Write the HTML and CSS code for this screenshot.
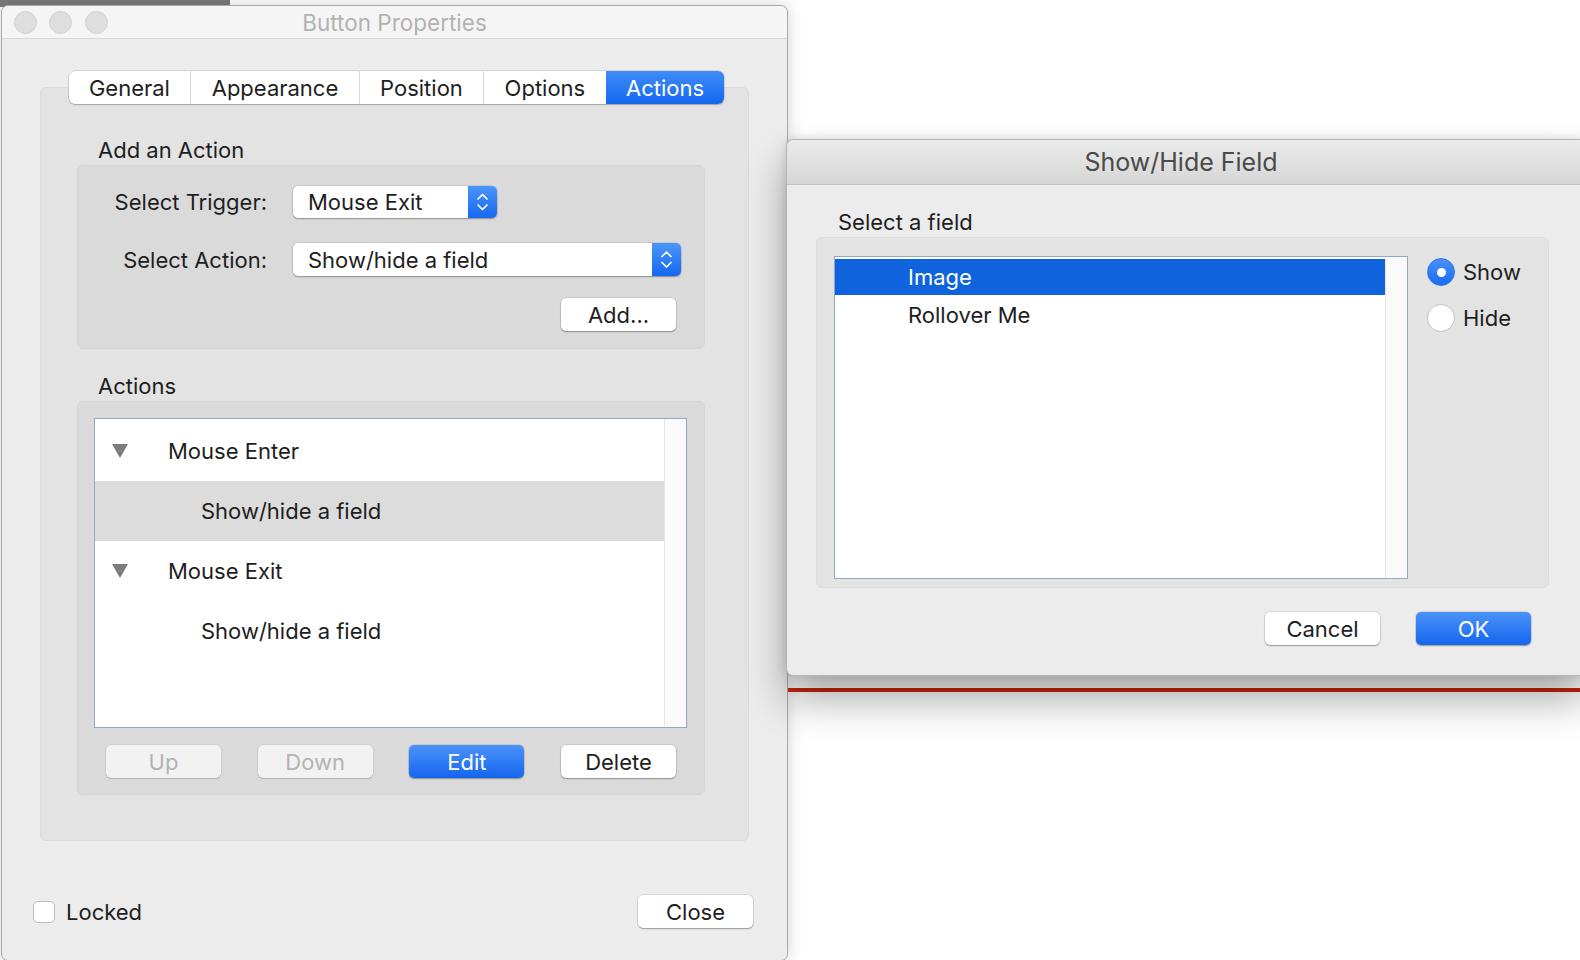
FILE: index.html
```html
<!DOCTYPE html>
<html>
<head>
<meta charset="utf-8">
<title>Button Properties</title>
<link rel="stylesheet" href="styles.css">
</head>
<body>
<div class="topstrip"></div>

<div class="win main">
  <div class="titlebar">
    <div class="lights"><span></span><span></span><span></span></div>
    <div class="wtitle">Button Properties</div>
    <div></div>
  </div>
  <div class="mbody">
    <div class="tabs">
      <div class="tab">General</div>
      <div class="tab">Appearance</div>
      <div class="tab">Position</div>
      <div class="tab">Options</div>
      <div class="tab active">Actions</div>
    </div>
    <div class="panel">
      <div class="seclabel">Add an Action</div>
      <div class="group g1">
        <div class="form">
          <div class="flabel">Select Trigger:</div>
          <div class="popup w1">
            <span class="ptext">Mouse Exit</span>
            <span class="stepper"><svg width="29" height="32" viewBox="0 0 29 32"><path d="M10 13 L14.5 8.5 L19 13" fill="none" stroke="#fff" stroke-width="1.7" stroke-linecap="round" stroke-linejoin="round"/><path d="M10 19 L14.5 23.5 L19 19" fill="none" stroke="#fff" stroke-width="1.7" stroke-linecap="round" stroke-linejoin="round"/></svg></span>
          </div>
          <div class="flabel">Select Action:</div>
          <div class="popup w2">
            <span class="ptext">Show/hide a field</span>
            <span class="stepper"><svg width="29" height="33" viewBox="0 0 29 33"><path d="M10 13.5 L14.5 9 L19 13.5" fill="none" stroke="#fff" stroke-width="1.7" stroke-linecap="round" stroke-linejoin="round"/><path d="M10 19.5 L14.5 24 L19 19.5" fill="none" stroke="#fff" stroke-width="1.7" stroke-linecap="round" stroke-linejoin="round"/></svg></span>
          </div>
        </div>
        <div class="addrow"><div class="btn">Add...</div></div>
      </div>
      <div class="seclabel gap">Actions</div>
      <div class="group g2">
        <div class="list">
          <div class="rows">
            <div class="row parent"><svg class="tri" width="16" height="14" viewBox="0 0 16 14"><polygon points="0,0 16,0 8,14" fill="#7d7d7d"/></svg><span>Mouse Enter</span></div>
            <div class="row child sel">Show/hide a field</div>
            <div class="row parent"><svg class="tri" width="16" height="14" viewBox="0 0 16 14"><polygon points="0,0 16,0 8,14" fill="#7d7d7d"/></svg><span>Mouse Exit</span></div>
            <div class="row child">Show/hide a field</div>
          </div>
          <div class="track"></div>
        </div>
        <div class="btnrow">
          <div class="btn disabled">Up</div>
          <div class="btn disabled">Down</div>
          <div class="btn primary">Edit</div>
          <div class="btn">Delete</div>
        </div>
      </div>
    </div>
    <div class="footer">
      <div class="check"><span class="box"></span><span>Locked</span></div>
      <div class="btn">Close</div>
    </div>
  </div>
</div>

<div class="redline"></div>

<div class="win dialog">
  <div class="dtitlebar">Show/Hide Field</div>
  <div class="dbody">
    <div class="seclabel">Select a field</div>
    <div class="group dgroup">
      <div class="list dlist">
        <div class="drows">
          <div class="drow selected">Image</div>
          <div class="drow">Rollover Me</div>
        </div>
        <div class="track"></div>
      </div>
      <div class="radios">
        <div class="radio"><span class="rb on"><span class="dot"></span></span><span>Show</span></div>
        <div class="radio"><span class="rb"></span><span>Hide</span></div>
      </div>
    </div>
    <div class="dbtns">
      <div class="btn">Cancel</div>
      <div class="btn primary">OK</div>
    </div>
  </div>
</div>
</body>
</html>
```
FILE: styles.css
```css
* { box-sizing: border-box; }
html, body { margin: 0; padding: 0; }
body {
  width: 1580px;
  height: 960px;
  overflow: hidden;
  position: relative;
  background: #ffffff;
  font-family: "Inter", "Liberation Sans", sans-serif;
  font-size: 22px;
  color: #1e1e1e;
}
.topstrip {
  position: absolute;
  left: 0; top: 0;
  width: 230px; height: 7px;
  background: #7b7b7b;
}
.redline {
  position: absolute;
  left: 788px; top: 688px;
  width: 800px; height: 4px;
  background: #c8240f;
}
.win { position: absolute; }

/* main window */
.main {
  left: 1px; top: 5px;
  width: 787px; height: 956px;
  background: #ececec;
  border: 1px solid #a9a9a9;
  border-radius: 7px;
  box-shadow: 0 0 16px rgba(0,0,0,0.18);
  display: flex;
  flex-direction: column;
}
.titlebar {
  height: 33px;
  flex: none;
  display: grid;
  grid-template-columns: 1fr auto 1fr;
  align-items: center;
  background: #f5f5f5;
  border-bottom: 1px solid #d9d9d9;
  border-radius: 7px 7px 0 0;
}
.lights { display: flex; gap: 12.5px; padding-left: 11.5px; }
.lights span {
  width: 23px; height: 23px;
  border-radius: 50%;
  background: #dedede;
  border: 1px solid #d2d2d2;
}
.wtitle { font-size: 22.5px; color: #b2b2b2; }

.mbody {
  flex: 1;
  display: flex;
  flex-direction: column;
  padding: 32px 38px 0 38px;
}
.tabs {
  align-self: center;
  display: flex;
  height: 33px;
  background: #fff;
  border-radius: 6px;
  box-shadow: 0 0 0 0.5px rgba(0,0,0,0.18), 0 1px 1.5px rgba(0,0,0,0.22);
  position: relative;
  z-index: 1;
  margin: 0 0 -17px 4px;
}
.tab {
  padding: 0 20.4px;
  display: flex;
  align-items: center;
  border-left: 1px solid #dadada;
}
.tab:first-child { border-left: none; }
.tab.active {
  background: linear-gradient(#3f8cf8, #1468f0);
  color: #fff;
  border-radius: 0 6px 6px 0;
  border-left: none;
}
.panel {
  background: #e3e3e3;
  border: 1px solid #dbdbdb;
  border-radius: 6px;
  padding: 49px 43px 45px 36px;
}
.seclabel {
  line-height: 26px;
  height: 26px;
  margin: 0 0 2px 21px;
}
.seclabel.gap { margin-top: 24px; }
.group {
  background: #dadada;
  border: 1px solid #d5d5d5;
  border-radius: 6px;
}
.g1 { padding: 20px 23px 17px 0; }
.form {
  display: grid;
  grid-template-columns: 189px auto;
  column-gap: 26px;
  row-gap: 25px;
  align-items: center;
}
.flabel { text-align: right; }
.popup {
  display: flex;
  align-items: center;
  background: #fff;
  border-radius: 5px;
  box-shadow: 0 0 0 0.5px rgba(0,0,0,0.15), 0 1px 1.5px rgba(0,0,0,0.3);
  justify-self: start;
}
.popup.w1 { width: 204px; height: 32px; }
.popup.w2 { width: 388px; height: 33px; }
.ptext { flex: 1; padding-left: 15px; white-space: nowrap; }
.stepper {
  width: 29px;
  height: 100%;
  background: linear-gradient(#4b95f9, #1668f0);
  border-radius: 0 5px 5px 0;
  display: flex;
}
.addrow {
  display: flex;
  justify-content: flex-end;
  margin-top: 22px;
  padding-right: 5px;
}
.btn {
  width: 115px;
  height: 33px;
  display: flex;
  align-items: center;
  justify-content: center;
  background: #fff;
  border-radius: 5px;
  box-shadow: 0 0 0 0.5px rgba(0,0,0,0.16), 0 1px 1.5px rgba(0,0,0,0.3);
}
.btn.disabled { background: #f2f2f2; color: #b3b3b3; box-shadow: 0 0 0 0.5px rgba(0,0,0,0.1), 0 1px 1px rgba(0,0,0,0.15); }
.btn.primary { background: linear-gradient(#4b93f8, #1565ef); color: #fff; }

.g2 { padding: 16px 17px 16px 16px; }
.list {
  display: flex;
  background: #fff;
  border: 1px solid #93a8c8;
}
.g2 .list { height: 310px; }
.rows { flex: 1; padding-top: 2px; }
.row {
  height: 60px;
  display: flex;
  align-items: center;
}
.row.parent { padding-left: 17px; }
.row.parent span { margin-left: 40px; }
.row.child { padding-left: 106px; }
.row.sel { background: #dcdcdc; }
.track {
  width: 22px;
  background: #fafafa;
  border-left: 1px solid #e8e8e8;
}
.btnrow {
  display: flex;
  justify-content: space-between;
  margin-top: 17px;
  padding: 0 11px 0 12px;
}
.footer {
  display: flex;
  align-items: center;
  justify-content: space-between;
  margin: 54px -4px 0 -7px;
}
.check { display: flex; align-items: center; gap: 11px; }
.box {
  width: 22px; height: 22px;
  background: #fff;
  border: 1px solid #bdbdbd;
  border-radius: 5px;
}

/* dialog */
.dialog {
  left: 786px; top: 139px;
  width: 800px; height: 537px;
  background: #ececec;
  border: 1px solid #b2b2b2;
  border-right: none;
  border-radius: 7px 0 0 7px;
  box-shadow: 0 24px 40px rgba(0,0,0,0.33), 0 0 12px rgba(0,0,0,0.12);
  z-index: 2;
  display: flex;
  flex-direction: column;
}
.dtitlebar {
  height: 45px;
  flex: none;
  display: flex;
  align-items: center;
  justify-content: center;
  padding-right: 11px;
  font-size: 25px;
  color: #4a4a4a;
  background: linear-gradient(#ebebeb, #d6d6d6);
  border-bottom: 1px solid #c3c3c3;
  border-radius: 7px 0 0 0;
}
.dbody { padding: 24px 0 0 29px; }
.dbody .seclabel { margin-left: 22px; }
.dgroup {
  width: 733px;
  height: 351px;
  background: #e3e3e3;
  border: 1px solid #dcdcdc;
  display: flex;
  padding: 18px 0 0 17px;
}
.dlist { width: 574px; height: 323px; }
.drows { flex: 1; padding-top: 2px; display: flex; flex-direction: column; gap: 2px; }
.drow {
  height: 36px;
  display: flex;
  align-items: center;
  padding-left: 73px;
}
.drow.selected { background: #0f63dc; color: #fff; }
.radios {
  display: flex;
  flex-direction: column;
  gap: 18px;
  margin-left: 19px;
  padding-top: 2px;
}
.radio { display: flex; align-items: center; gap: 8px; height: 28px; }
.rb {
  width: 28px; height: 28px;
  border-radius: 50%;
  background: #fff;
  border: 1px solid #c2c2c2;
  display: flex;
  align-items: center;
  justify-content: center;
}
.rb.on { background: linear-gradient(#4a8ff8, #1a6cf0); border-color: #2d78ee; }
.dot { width: 9px; height: 9px; border-radius: 50%; background: #fff; }
.dbtns {
  width: 733px;
  display: flex;
  justify-content: flex-end;
  gap: 36px;
  margin-top: 24px;
  padding-right: 18px;
}
```
